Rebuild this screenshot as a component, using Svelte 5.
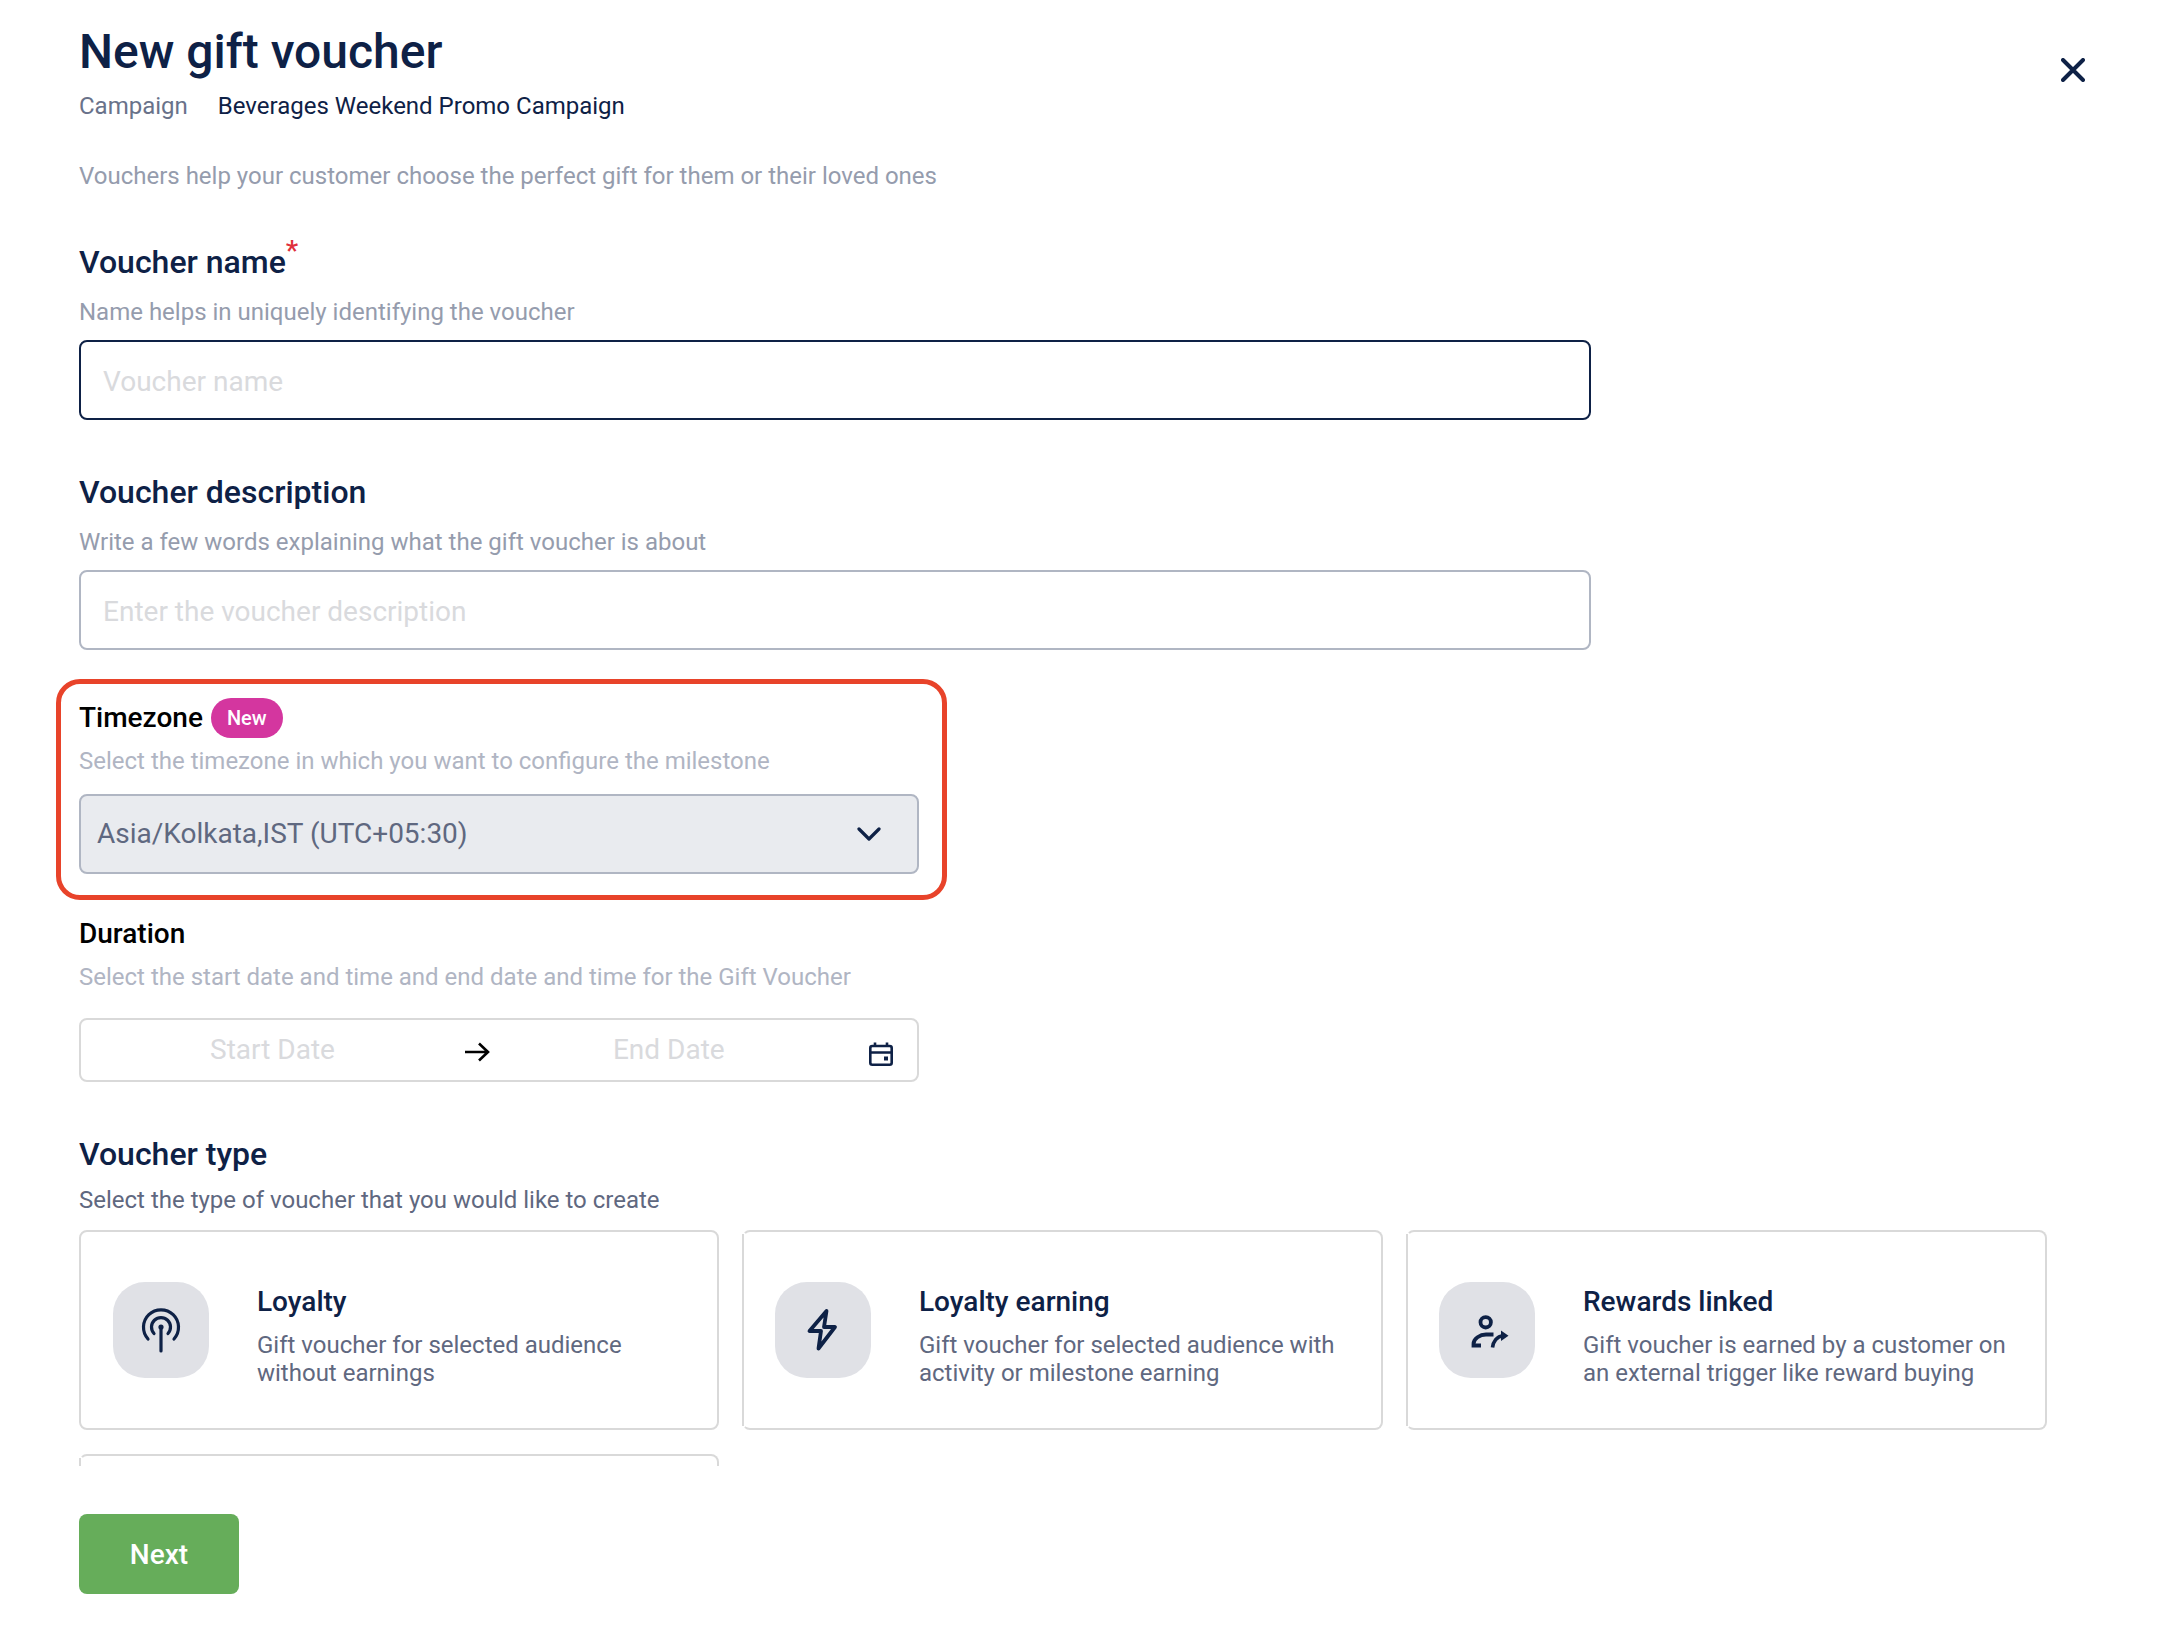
<script lang="ts">
	const voucherTypes = [
		{
			id: 'loyalty',
			title: 'Loyalty',
			lines: ['Gift voucher for selected audience', 'without earnings']
		},
		{
			id: 'earning',
			title: 'Loyalty earning',
			lines: ['Gift voucher for selected audience with', 'activity or milestone earning']
		},
		{
			id: 'rewards',
			title: 'Rewards linked',
			lines: ['Gift voucher is earned by a customer on', 'an external trigger like reward buying']
		}
	];
</script>

<div class="page">
	<header class="header">
		<div>
			<h1 class="title">New gift voucher</h1>
			<div class="campaign">
				<span class="campaign__label">Campaign</span>
				<span class="campaign__value">Beverages Weekend Promo Campaign</span>
			</div>
		</div>
		<button class="close" aria-label="Close">
			<svg width="24" height="24" viewBox="0 0 24 24" fill="none" stroke="#0e2146" stroke-width="4" stroke-linecap="round">
				<path d="M2 2 22 22M22 2 2 22" />
			</svg>
		</button>
	</header>

	<p class="intro">Vouchers help your customer choose the perfect gift for them or their loved ones</p>

	<section class="field field--name">
		<h2 class="label">Voucher name<span class="required">*</span></h2>
		<p class="help">Name helps in uniquely identifying the voucher</p>
		<input class="input input--focus" placeholder="Voucher name" />
	</section>

	<section class="field field--description">
		<h2 class="label">Voucher description</h2>
		<p class="help">Write a few words explaining what the gift voucher is about</p>
		<input class="input" placeholder="Enter the voucher description" />
	</section>

	<section class="timezone">
		<div class="timezone__head">
			<h3 class="label-sm">Timezone</h3>
			<span class="badge">New</span>
		</div>
		<p class="help help--light timezone__help">Select the timezone in which you want to configure the milestone</p>
		<div class="select">
			<span class="select__value">Asia/Kolkata,IST (UTC+05:30)</span>
			<svg width="24" height="14" viewBox="0 0 24 14" fill="none" stroke="#0e2146" stroke-width="3.2" stroke-linecap="round" stroke-linejoin="round">
				<path d="M2 2 12 12 22 2" />
			</svg>
		</div>
	</section>

	<section class="duration">
		<h3 class="label-sm">Duration</h3>
		<p class="help help--light duration__help">Select the start date and time and end date and time for the Gift Voucher</p>
		<div class="dates">
			<span class="dates__start">Start Date</span>
			<svg class="dates__arrow" width="25" height="20" viewBox="0 0 25 20" fill="none" stroke="#000" stroke-width="2.6">
				<path d="M0 10H23M14 1.5 23 10 14 18.5" />
			</svg>
			<span class="dates__end">End Date</span>
			<svg class="dates__calendar" width="24" height="24" viewBox="0 0 24 24" fill="none" stroke="#0e2146" stroke-width="2.6">
				<rect x="1.3" y="4" width="21.4" height="18.7" rx="2" />
				<path d="M1.3 10.5H22.7M6 .5V4M18 .5V4" />
				<rect x="15" y="14.5" width="4" height="4" fill="#0e2146" stroke="none" />
			</svg>
		</div>
	</section>

	<section class="types">
		<h2 class="label">Voucher type</h2>
		<p class="help help--dark types__help">Select the type of voucher that you would like to create</p>
		<div class="types__clip">
			<div class="types__grid">
				{#each voucherTypes as type, i}
					<div class="card" class:card--seam={i > 0}>
						<div class="card__icon">
							<svg width="48" height="48" viewBox="0 0 48 48" fill="none" stroke="#0e2146" stroke-width="3.2" stroke-linecap="round" stroke-linejoin="round">
								{#if type.id === 'loyalty'}
									<path d="M11 33A17.5 17.5 0 1 1 37 33" />
									<path d="M17 27.5A9.5 9.5 0 1 1 31 27.5" />
									<path d="M24 21V45" />
									<circle cx="24" cy="21" r="2.6" fill="#0e2146" stroke="none" />
								{:else if type.id === 'earning'}
									<path d="M27.5 5 10.5 25H22L19.5 42.5 36 21H25Z" stroke-width="3.8" />
								{:else}
									<circle cx="22.7" cy="16.3" r="5.2" stroke-width="3.8" />
									<path d="M18 39.5H10.5V38C10.5 32.5 17 28.5 23 28.5H30.5" stroke-width="3.8" stroke-linecap="butt" stroke-linejoin="miter" />
									<path d="M29.5 41.5C30 36 34 30 40 29.7" stroke-width="3.6" stroke-linecap="butt" />
									<path d="M38 24.5 45.5 29.7 38 35Z" fill="#0e2146" stroke="none" />
								{/if}
							</svg>
						</div>
						<div class="card__text">
							<div class="card__title">{type.title}</div>
							<div class="card__desc">
								{#each type.lines as line}
									<div>{line}</div>
								{/each}
							</div>
						</div>
					</div>
				{/each}
				<div class="card card--seam"></div>
			</div>
		</div>
	</section>

	<button class="next">Next</button>
</div>

<style>
	:global(body) {
		background: #fff;
	}

	.page {
		box-sizing: border-box;
		width: 2162px;
		height: 1628px;
		padding: 24px 0 0 79px;
		font-family: Roboto, 'Liberation Sans', sans-serif;
		color: #0e2146;
		overflow: hidden;
	}

	h1,
	h2,
	h3,
	p {
		margin: 0;
	}

	.header {
		display: flex;
		justify-content: space-between;
		align-items: flex-start;
		padding-right: 77px;
	}

	.title {
		font-size: 48px;
		line-height: 56px;
		font-weight: 500;
	}

	.campaign {
		display: flex;
		gap: 30px;
		margin-top: 10px;
		font-size: 24px;
		line-height: 32px;
	}

	.campaign__label {
		color: #69728a;
	}

	.close {
		display: flex;
		margin-top: 34px;
		padding: 0;
		border: 0;
		background: none;
	}

	.intro {
		margin-top: 38px;
		font-size: 24px;
		line-height: 32px;
		color: #959cad;
	}

	.field {
		width: 1512px;
	}

	.field--name {
		margin-top: 50px;
	}

	.field--description {
		margin-top: 52px;
	}

	.label {
		font-size: 32px;
		line-height: 40px;
		font-weight: 500;
	}

	.required {
		position: relative;
		top: -13px;
		font-size: 28px;
		line-height: 0;
		color: #e0303c;
	}

	.label-sm {
		font-size: 28px;
		line-height: 40px;
		font-weight: 500;
		color: #000;
	}

	.help {
		margin-top: 14px;
		font-size: 24px;
		line-height: 32px;
		color: #959cad;
	}

	.help--light {
		color: #b0b5c3;
	}

	.help--dark {
		color: #5f6880;
	}

	.input {
		display: block;
		box-sizing: border-box;
		width: 100%;
		height: 80px;
		margin-top: 12px;
		padding: 2px 22px 0;
		border: 2px solid #b0b6c3;
		border-radius: 8px;
		outline: none;
		font-family: inherit;
		font-size: 28px;
		color: #0e2146;
	}

	.input::placeholder {
		color: #d9dadd;
		opacity: 1;
	}

	.input--focus {
		border-color: #0e2146;
	}

	.timezone {
		box-sizing: border-box;
		width: 891px;
		margin: 29px 0 0 -23px;
		padding: 14px 23px 21px 18px;
		border: 5px solid #e8432a;
		border-radius: 24px;
	}

	.timezone__head {
		display: flex;
		align-items: center;
		gap: 8px;
	}

	.badge {
		display: flex;
		align-items: center;
		height: 40px;
		padding: 0 16px;
		border-radius: 20px;
		background: #d4369f;
		color: #fff;
		font-size: 20px;
		font-weight: 500;
	}

	.timezone__help {
		margin-top: 7px;
	}

	.select {
		display: flex;
		align-items: center;
		justify-content: space-between;
		box-sizing: border-box;
		height: 80px;
		margin-top: 17px;
		padding: 0 36px 0 16px;
		border: 2px solid #b0b6c3;
		border-radius: 8px;
		background: #e9ebef;
		font-size: 28px;
		color: #5f6880;
	}

	.select__value {
		margin-top: -2px;
	}

	.duration {
		margin-top: 14px;
	}

	.duration__help {
		margin-top: 7px;
	}

	.dates {
		display: flex;
		align-items: center;
		box-sizing: border-box;
		width: 840px;
		height: 64px;
		margin-top: 25px;
		border: 2px solid #d9d9d9;
		border-radius: 8px;
		font-size: 28px;
		color: #d9dadd;
	}

	.dates__start {
		margin-left: 129px;
		margin-top: -2px;
	}

	.dates__arrow {
		margin-left: 130px;
		margin-top: 3px;
	}

	.dates__end {
		margin-left: 123px;
		margin-top: -2px;
	}

	.dates__calendar {
		margin-left: auto;
		margin-right: 24px;
		margin-top: 7px;
	}

	.types {
		margin-top: 52px;
	}

	.types__help {
		margin-top: 10px;
	}

	.types__clip {
		width: 1972px;
		height: 236px;
		margin: 14px 0 0 -4px;
		padding-left: 4px;
		overflow: hidden;
	}

	.types__grid {
		display: grid;
		grid-template-columns: 640px 641px 641px;
		gap: 24px 23px;
	}

	.card {
		position: relative;
		display: flex;
		align-items: center;
		gap: 48px;
		box-sizing: border-box;
		height: 200px;
		padding: 0 32px;
		border: 2px solid #d9d9d9;
		border-radius: 8px;
	}

	.card--seam {
		padding-left: 31px;
		border-left-color: transparent;
	}

	.card--seam::before {
		content: '';
		position: absolute;
		left: -2px;
		top: 2px;
		bottom: 2px;
		width: 2px;
		background: #d9d9d9;
	}

	.card__icon {
		display: flex;
		align-items: center;
		justify-content: center;
		flex: none;
		width: 96px;
		height: 96px;
		border-radius: 32px;
		background: #e0e1e6;
	}

	.card__text {
		margin-top: 10px;
	}

	.card__title {
		font-size: 28px;
		line-height: 36px;
		font-weight: 500;
	}

	.card__desc {
		margin-top: 11px;
		font-size: 24px;
		line-height: 28px;
		color: #5f6880;
	}

	.next {
		display: block;
		width: 160px;
		height: 80px;
		margin-top: 48px;
		padding: 0;
		border: 0;
		border-radius: 8px;
		background: #66ad5a;
		color: #fff;
		font-family: inherit;
		font-size: 28px;
		font-weight: 500;
	}
</style>
